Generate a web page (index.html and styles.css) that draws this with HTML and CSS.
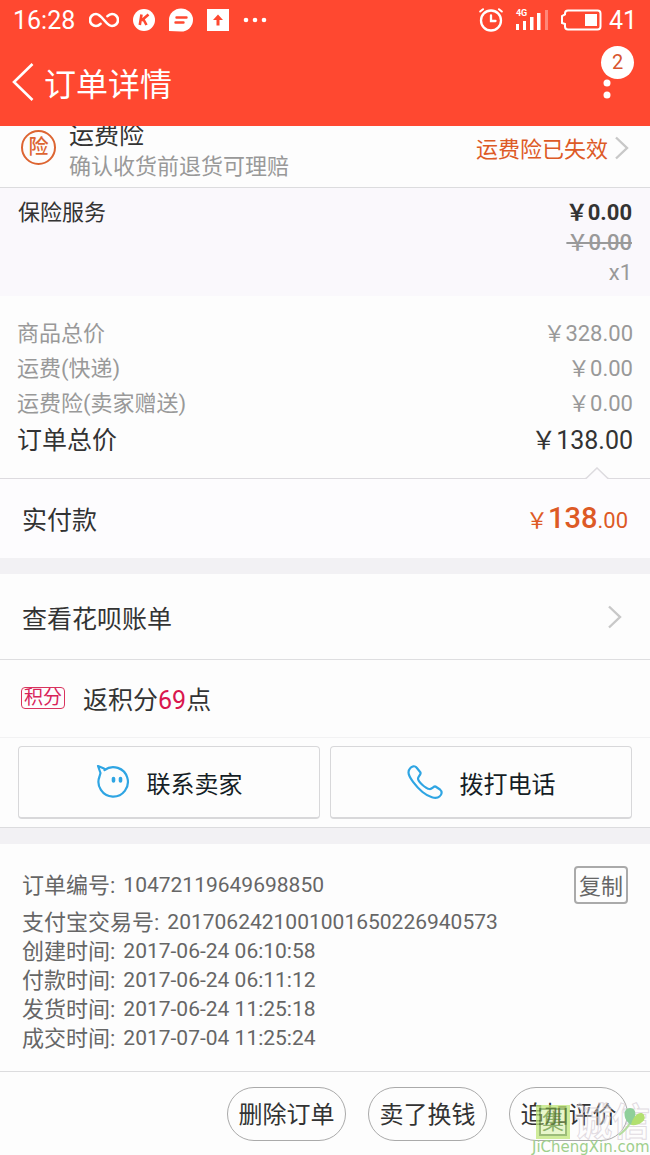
FILE: index.html
```html
<!DOCTYPE html>
<html lang="zh-CN">
<head>
  <meta charset="UTF-8" />
  <meta name="viewport" content="width=device-width, initial-scale=1.0"/>
  <title>订单详情</title>
  <link rel="stylesheet" href="styles.css">
</head>
<body>
  <header class="top">
    <div class="status">
      <span>16:28</span>
      <svg width="30" height="16" viewBox="0 0 30 16" fill="none" stroke="#fff" stroke-width="2.6" stroke-linecap="round"><path d="M18.5 4.2C20 2.6 21.300 2 23 2a6 6 0 0 1 0 12c-6 0-10-12-16-12a6 6 0 0 0 0 12c1.700 0 3-.6 4.500-2.200"/></svg>
      <svg width="22" height="22" viewBox="0 0 22 22"><circle cx="11" cy="11" r="11" fill="#fff"/><path d="M8.500 5.500L6.800 16M15.500 5.500L8.500 11.500M10.500 10.500L13.500 16" fill="none" stroke="#ff4830" stroke-width="2.600"/></svg>
      <svg width="24" height="24" viewBox="0 0 24 24"><path d="M0 23V12A12 11.500 0 1 1 12 23.500z" fill="#fff"/><path d="M7.500 9.500h10M6.500 14.500h8" stroke="#ff4830" stroke-width="2.400" stroke-linecap="round"/></svg>
      <svg width="22" height="22" viewBox="0 0 22 22"><path fill="#fff" d="M0 0h22v22H0z"/><path fill="#ff4830" d="M11 5.500l5 5.500h-3.500v5.500h-3V11H6z"/></svg>
      <svg width="24" height="6" viewBox="0 0 24 6" fill="#fff"><circle cx="3" cy="3" r="2.300"/><circle cx="12" cy="3" r="2.300"/><circle cx="21" cy="3" r="2.300"/></svg>
      <div class="status-right">
        <svg width="24" height="24" viewBox="0 0 24 24" fill="none" stroke="#fff" stroke-width="2.300" stroke-linecap="round"><circle cx="12" cy="12.500" r="10"/><path d="M12 7.500v5.500h4.500"/><path d="M1.200 3.500L4 1.200M22.800 3.500L20 1.200" stroke-width="2"/></svg>
        <span class="signal">
          <svg width="32" height="20" viewBox="0 0 32 20" fill="#fff"><path d="M0 14h3v6H0zM7 11h3v9H7zM14 7h3.500v13H14zM21 3h3.500v17H21z"/><path d="M29 0h3v20h-3z" opacity=".35"/></svg>
          <span class="net">4G</span>
        </span>
        <svg width="41" height="22" viewBox="0 0 41 22"><path d="M7 1.500h29.500a3 3 0 0 1 3 3v13a3 3 0 0 1-3 3H7a3 3 0 0 1-3-3V15L1 14V7l3-1.500V4.500a3 3 0 0 1 3-3z" fill="none" stroke="#fff" stroke-width="2"/><path d="M24 5h12v12H24z" fill="#fff"/></svg>
        <span class="percent">41</span>
      </div>
    </div>
    <div class="nav">
      <button class="back" aria-label="返回"><svg width="22" height="38" viewBox="0 0 22 38" fill="none" stroke="#fff" stroke-width="2.600"><path d="M20.500 1L2 19l18.500 18"/></svg></button>
      <h1>订单详情</h1>
      <button class="more" aria-label="更多"><svg width="8" height="36" viewBox="0 0 8 36" fill="#fff"><circle cx="4" cy="19" r="3.500"/><circle cx="4" cy="31" r="3.500"/></svg><span class="badge">2</span></button>
    </div>
  </header>

  <main>
    <section class="freight">
      <span class="freight-icon">险</span>
      <div class="freight-text">
        <h2>运费险</h2>
        <p>确认收货前退货可理赔</p>
      </div>
      <a class="freight-state" href="#"><span>运费险已失效</span>
        <svg width="14" height="24" viewBox="0 0 14 24" fill="none" stroke="#c8c8c8" stroke-width="2.400"><path d="M1 1.500L12 12 1 22.500"/></svg>
      </a>
    </section>

    <section class="service">
      <p>保险服务</p>
      <div class="service-price">
        <strong>￥0.00</strong>
        <s>￥0.00</s>
        <span>x1</span>
      </div>
    </section>

    <section class="prices">
      <p class="line"><span>商品总价</span><span>￥328.00</span></p>
      <p class="line"><span>运费(快递)</span><span>￥0.00</span></p>
      <p class="line"><span>运费险(卖家赠送)</span><span>￥0.00</span></p>
      <p class="line total"><span>订单总价</span><span>￥138.00</span></p>
      <svg class="caret" width="24" height="12" viewBox="0 0 24 12"><path d="M0 12L12 1l12 11z" fill="#fdfcfe"/><path d="M0 11.500h1L12 1l11 10.500h1" fill="none" stroke="#dddbdf" stroke-width="1.500"/></svg>
    </section>

    <section class="paid">
      <span>实付款</span>
      <span class="amount">￥<b>138</b>.00</span>
    </section>

    <a class="bill" href="#"><span>查看花呗账单</span>
      <svg width="14" height="24" viewBox="0 0 14 24" fill="none" stroke="#c8c8c8" stroke-width="2.400"><path d="M1 1.500L12 12 1 22.500"/></svg>
    </a>

    <section class="points">
      <span class="tag">积分</span>
      <p>返积分<em>69</em>点</p>
    </section>

    <section class="contact">
      <button>
        <svg width="34" height="36" viewBox="0 0 34 36" fill="none" stroke="#2fa5e3" stroke-width="2.200" stroke-linejoin="round" stroke-linecap="round"><path d="M8.500 6A14.700 14.700 0 1 1 3.500 12.500M3.500 12.500L4.500 9 2 2l6 2.500L9 5.800"/><path d="M17.500 14.500v2.500M24.500 14.500v2.500" stroke-width="3.600"/></svg>
        联系卖家
      </button>
      <button>
        <svg width="36" height="36" viewBox="0 0 36 36" fill="none" stroke="#2fa5e3" stroke-width="2.200" stroke-linejoin="round"><path d="M3 4.500C4.500 2 8 1.500 9.500 3.500l4 5c1 1.500-2.500 4-2.500 6 0 3 7.500 10 11.500 10.500 2.500.5 4-3 6-2.500l4.500 3c2.500 2 2 5-.5 7-3.500 3-11 .5-17-4.500C9 22.500 1.500 13 1.500 8.500c0-1.500.5-3 1.500-4z"/></svg>
        拨打电话
      </button>
    </section>

    <section class="info">
      <div class="info-first">
        <p><span>订单编号:</span>10472119649698850</p>
        <button class="copy">复制</button>
      </div>
      <p><span>支付宝交易号:</span>2017062421001001650226940573</p>
      <p><span>创建时间:</span>2017-06-24 06:10:58</p>
      <p><span>付款时间:</span>2017-06-24 06:11:12</p>
      <p><span>发货时间:</span>2017-06-24 11:25:18</p>
      <p><span>成交时间:</span>2017-07-04 11:25:24</p>
    </section>
  </main>

  <footer class="actions">
    <button>删除订单</button>
    <button>卖了换钱</button>
    <button>追加评价</button>
    <div class="mark">
      <div class="mark-logo">
        <span class="seal">集</span>
        <span class="outline">诚信</span>
        <svg class="leaf" width="30" height="30" viewBox="0 0 30 30"><path d="M1 28C5 25 9 22 12 16" fill="none" stroke="#b5dda0" stroke-width="2"/><path d="M13 18C4 12 5 1 12 1c7 0 7 9 1 17z" fill="#8fcf9a"/><path d="M13 18C15 8 23 3 26 8c3 6-5 11-13 10z" fill="#b2e070"/></svg>
      </div>
      <span class="site">JiChengXin.com</span>
    </div>
  </footer>
</body>
</html>
```

FILE: styles.css
```css
* {
  box-sizing: border-box;
}

body {
  margin: 0;
  font-family: Roboto, 'Noto Sans CJK SC', sans-serif;
  font-size: 22px;
  color: #333;
  background: #fdfdfd;
}

h1, h2, p {
  margin: 0;
  font-weight: normal;
}

a {
  color: inherit;
  text-decoration: none;
}

button {
  font-family: inherit;
  color: inherit;
  padding: 0;
  border: none;
  background: none;
  cursor: pointer;
}

svg {
  display: block;
  flex: none;
}

/* header */
.top {
  position: sticky;
  top: 0;
  z-index: 2;
  background: #ff4830;
  color: #fff;
}

.status {
  display: flex;
  align-items: center;
  gap: 14px;
  height: 40px;
  padding: 0 13px;
  font-size: 25px;
}

.status-right {
  display: flex;
  align-items: center;
  gap: 13px;
  margin-left: auto;
}

.percent {
  margin-left: -6px;
}

.signal {
  position: relative;
}

.net {
  position: absolute;
  left: 0;
  top: -1px;
  font-size: 9px;
  line-height: 9px;
  font-weight: bold;
}

.nav {
  display: flex;
  align-items: center;
  height: 86px;
  padding: 0 39px 2px 12px;
}

.nav h1 {
  flex: 1;
  margin-left: 10px;
  font-size: 32px;
}

.more {
  position: relative;
}

.badge {
  position: absolute;
  left: -2px;
  top: -18px;
  width: 33px;
  height: 33px;
  border-radius: 50%;
  background: #fff;
  color: #d8552f;
  font-size: 20px;
  line-height: 33px;
}

/* the first row is scrolled a little way under the header */
.freight {
  display: flex;
  align-items: center;
  height: 80px;
  margin-top: -18px;
  padding: 0 21px;
  border-bottom: 1px solid #dcdcde;
}

.freight-icon {
  width: 35px;
  height: 35px;
  border: 2px solid #dd6532;
  border-radius: 50%;
  color: #dd6532;
  font-size: 20px;
  font-weight: 500;
  line-height: 31px;
  text-align: center;
}

.freight-text {
  flex: 1;
  margin-left: 13px;
  padding-top: 7px;
}

.freight-text h2 {
  font-size: 25px;
  line-height: 32px;
}

.freight-text p {
  line-height: 30px;
  color: #999;
}

.freight-state {
  display: flex;
  align-items: center;
  gap: 7px;
  color: #dd5a26;
}

.freight-state span {
  padding-bottom: 2px;
}

.service {
  display: flex;
  justify-content: space-between;
  padding: 10px 18px 8px;
  line-height: 30px;
  background: #faf8fc;
}

.service-price {
  display: flex;
  flex-direction: column;
  align-items: flex-end;
  color: #999;
}

.service-price strong {
  color: #333;
}

.service-price s {
  font-weight: 500;
}

.prices {
  position: relative;
  padding: 20px 17px 17px;
  border-bottom: 1px solid #dddbdf;
  color: #999;
}

.line {
  display: flex;
  justify-content: space-between;
  line-height: 35px;
}

.total {
  font-size: 25px;
  line-height: 40px;
  color: #333;
}

.caret {
  position: absolute;
  right: 41px;
  bottom: -1px;
}

.paid {
  display: flex;
  align-items: center;
  justify-content: space-between;
  height: 79px;
  padding: 0 22px 2px;
  font-size: 25px;
  background: #fdfcfe;
}

.amount {
  font-size: 22px;
  color: #dd5a26;
}

.amount b {
  font-size: 29px;
  font-weight: 500;
}

.bill {
  display: flex;
  align-items: center;
  justify-content: space-between;
  height: 102px;
  padding: 0 28px 0 22px;
  border-top: 16px solid #f2f1f4;
  border-bottom: 1px solid #dedee0;
  font-size: 25px;
}

.points {
  display: flex;
  align-items: center;
  gap: 18px;
  height: 78px;
  padding: 0 21px 1px;
  border-bottom: 1px solid #f2f2f3;
  font-size: 25px;
}

.tag {
  padding: 0 2px;
  border: 1px solid #d9345e;
  border-radius: 4px;
  color: #d9245a;
  font-size: 19px;
  line-height: 20px;
}

.points em {
  font-style: normal;
  color: #d9174e;
}

.contact {
  display: flex;
  gap: 10px;
  padding: 8px 18px;
  border-bottom: 1px solid #dcdcde;
}

.contact button {
  display: flex;
  flex: 1;
  align-items: center;
  justify-content: center;
  gap: 17px;
  height: 73px;
  border: 1px solid #d8d8da;
  border-bottom-width: 2px;
  border-radius: 4px;
  font-size: 24px;
  color: #151e26;
}

.info {
  padding: 22px 22px 18px;
  border-top: 16px solid #f2f1f4;
  font-size: 21px;
  line-height: 29px;
  color: #666;
}

.info p {
  display: flex;
  gap: 8px;
}

.info span {
  font-size: 22px;
}

.info-first {
  display: flex;
  align-items: center;
  justify-content: space-between;
  margin-bottom: 4px;
}

.copy {
  width: 54px;
  height: 38px;
  padding-bottom: 4px;
  border: 2px solid #aaa;
  border-radius: 4px;
  font-size: 22px;
}

/* bottom bar */
.actions {
  position: relative;
  display: flex;
  justify-content: flex-end;
  gap: 22px;
  padding: 15px 22px 14px;
  border-top: 1px solid #dcdcde;
}

.actions button {
  width: 119px;
  height: 54px;
  padding-bottom: 4px;
  border: 1px solid #aaa;
  border-radius: 27px;
  font-size: 24px;
}

.mark {
  position: absolute;
  right: 0;
  bottom: 0;
  pointer-events: none;
}

.mark-logo {
  position: relative;
  display: flex;
  gap: 4px;
  margin-left: 4px;
}

.seal {
  width: 34px;
  height: 34px;
  border: 3px solid rgba(190, 230, 120, 0.6);
  outline: 2px solid rgba(80, 130, 40, 0.5);
  outline-offset: -5px;
  background: rgba(200, 235, 130, 0.4);
  color: rgba(80, 130, 40, 0.6);
  font-size: 22px;
  line-height: 28px;
  text-align: center;
}

.outline {
  font-size: 38px;
  line-height: 34px;
  font-weight: bold;
  color: rgba(255, 255, 255, 0.4);
  -webkit-text-stroke: 1px rgba(205, 195, 205, 0.6);
}

.leaf {
  position: absolute;
  right: 2px;
  top: 2px;
}

.site {
  display: block;
  font-family: 'DejaVu Sans', sans-serif;
  font-size: 15px;
  line-height: 16px;
  color: #9fcf8c;
}
```
